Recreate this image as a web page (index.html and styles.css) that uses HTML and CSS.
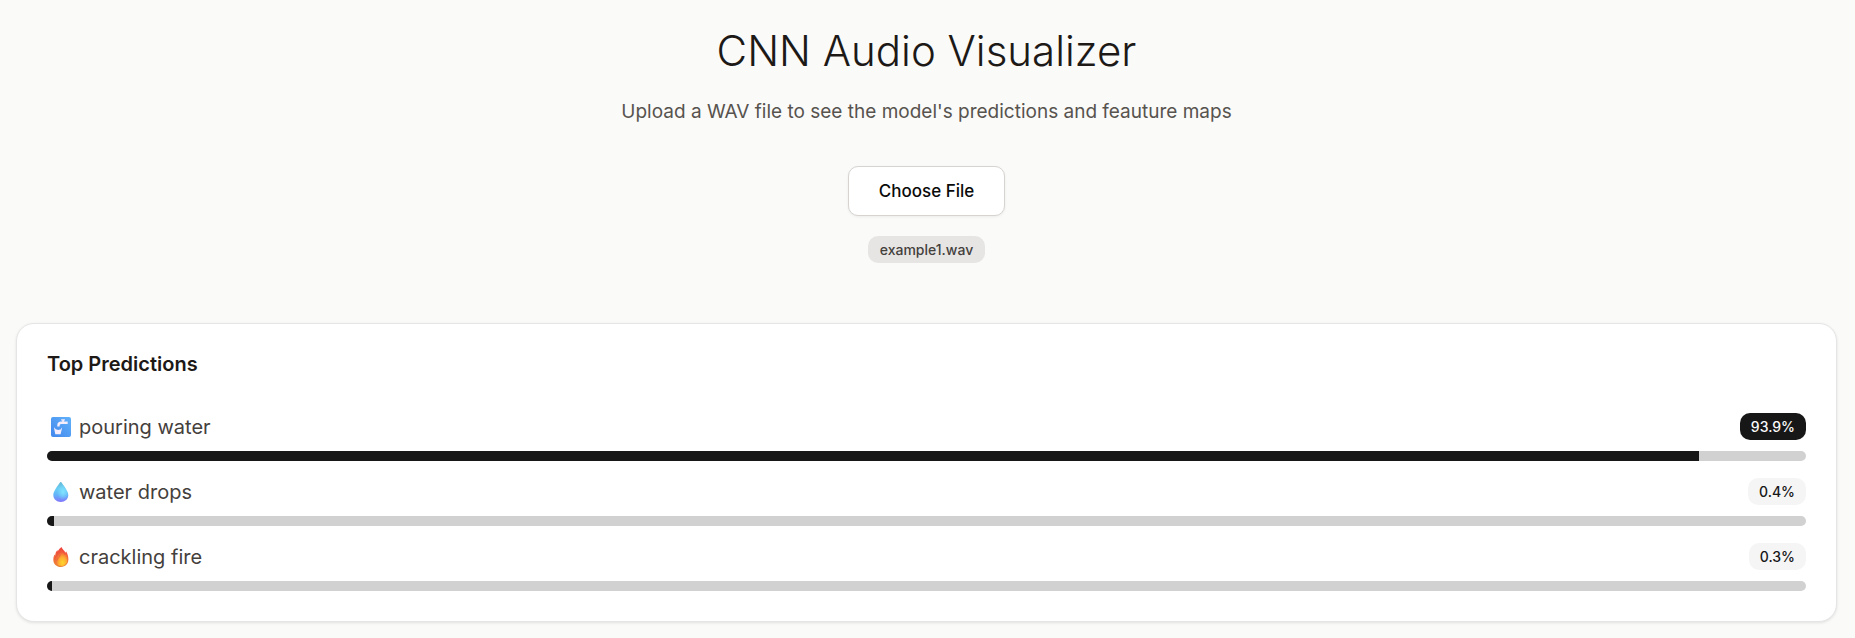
FILE: index.html
```html
<!DOCTYPE html>
<html lang="en">
<head>
<meta charset="utf-8">
<meta name="viewport" content="width=device-width, initial-scale=1">
<title>CNN Audio Visualizer</title>
<link rel="stylesheet" href="styles.css">
</head>
<body>
<main class="page">
  <header class="hero">
    <h1 class="title">CNN Audio Visualizer</h1>
    <p class="subtitle">Upload a WAV file to see the model's predictions and feauture maps</p>
    <button class="upload" type="button">Choose File</button>
    <span class="badge file-badge">example1.wav</span>
  </header>
  <section class="card" aria-labelledby="predictions-title">
    <h2 class="card-title" id="predictions-title">Top Predictions</h2>
    <ul class="predictions">
      <li class="prediction">
        <div class="row">
          <span class="label">
            <svg class="icon" viewBox="0 0 20 20" aria-hidden="true">
              <defs><linearGradient id="tap" x1="0" y1="1" x2="1" y2="0"><stop offset="0" stop-color="#4187ec"/><stop offset="1" stop-color="#62b2fb"/></linearGradient></defs>
              <rect width="20" height="20" rx="2" fill="url(#tap)"/>
              <path d="M6.300 9.500V8.200c0-2.300 1.500-3.600 3.800-3.600h1.100V3.400h-1V2.200h3.700v1.200h-1v1.100h3.800V7h-6.400C9.100 7 8.600 7.700 8.600 9.500z" fill="#f5edfb"/>
              <path d="M2.900 10.200 4.300 17.200h5.300l1.600-7-1.700 2.200-2.400.7-2.300-.8z" fill="#f5edfb"/>
            </svg>
            pouring water
          </span>
          <span class="badge badge-top">93.9%</span>
        </div>
        <div class="bar" role="progressbar" aria-label="pouring water" aria-valuenow="93.9" aria-valuemin="0" aria-valuemax="100"><div class="fill" style="width:93.9%"></div></div>
      </li>
      <li class="prediction">
        <div class="row">
          <span class="label">
            <svg class="icon" viewBox="0 0 20 20" aria-hidden="true">
              <defs>
                <linearGradient id="drop" x1="0" y1="0" x2="0" y2="1"><stop offset="0" stop-color="#67b9d6"/><stop offset=".35" stop-color="#68cdf5"/><stop offset=".65" stop-color="#63b2f8"/><stop offset="1" stop-color="#8275fb"/></linearGradient>
                <radialGradient id="shine" cx=".65" cy=".5" r=".4"><stop offset="0" stop-color="#82e3ff"/><stop offset="1" stop-color="#82e3ff" stop-opacity="0"/></radialGradient>
              </defs>
              <path d="M8.900.5c.4-.7 1.300-.7 1.700 0C13 4.300 17.300 9.200 17.300 13c0 4.100-3.300 7-7.500 7s-7.500-2.900-7.500-7C2.300 9.200 6.500 4.300 8.900.5z" fill="url(#drop)"/>
              <path d="M8.900.5c.4-.7 1.300-.7 1.700 0C13 4.300 17.300 9.200 17.300 13c0 4.100-3.300 7-7.500 7s-7.500-2.900-7.500-7C2.300 9.200 6.500 4.300 8.900.5z" fill="url(#shine)"/>
            </svg>
            water drops
          </span>
          <span class="badge">0.4%</span>
        </div>
        <div class="bar" role="progressbar" aria-label="water drops" aria-valuenow="0.4" aria-valuemin="0" aria-valuemax="100"><div class="fill" style="width:0.4%"></div></div>
      </li>
      <li class="prediction">
        <div class="row">
          <span class="label">
            <svg class="icon" viewBox="0 0 20 20" aria-hidden="true">
              <defs>
                <linearGradient id="flame" x1="0" y1="0" x2="0" y2="1"><stop offset="0" stop-color="#ef3f3e"/><stop offset=".5" stop-color="#f4683a"/><stop offset="1" stop-color="#e98638"/></linearGradient>
                <radialGradient id="glow" cx=".58" cy=".8" r=".65"><stop offset="0" stop-color="#ffd62c"/><stop offset=".5" stop-color="#fdae32"/><stop offset="1" stop-color="#f15b3b"/></radialGradient>
              </defs>
              <path d="M10.500 0c.6 2.300 3.300 4 4.300 5.800.3-.6.300-1 .3-1.500 1.600 2.400 2.300 5.300 2.300 8.300 0 4.400-3.100 7.400-7.500 7.400s-7.600-3-7.600-7.300c0-2 .5-3.800 1.500-5.200l.4 1.300c.1-2.400.8-4.300 2.300-5.800l.2 1.500C7.500 2.600 9 1.500 10.500 0z" fill="url(#flame)"/>
              <path d="M10.400 2.600c.2 2.400 2.400 3.600 3.700 5.600l.7-.8c1.300 2 1.900 4 1.600 6.300-.5 3.200-2.900 5.300-6.100 5.300-3.500 0-5.900-2.500-5.400-6.200C5.400 8.700 9.700 6.900 10.400 2.600z" fill="url(#glow)"/>
              <path d="M3.800 12.800c.2-3.500 2.400-4.700 3.300-7.500M6 13.600c.3-2.500 2.700-3.300 3.200-6" fill="none" stroke="#dd533c" stroke-width=".6"/>
            </svg>
            crackling fire
          </span>
          <span class="badge">0.3%</span>
        </div>
        <div class="bar" role="progressbar" aria-label="crackling fire" aria-valuenow="0.3" aria-valuemin="0" aria-valuemax="100"><div class="fill" style="width:0.3%"></div></div>
      </li>
    </ul>
  </section>
</main>
</body>
</html>
```

FILE: styles.css
```css
* {
  box-sizing: border-box;
}

body {
  margin: 0;
  background: #fafaf9;
  color: #1c1917;
  font-family: Inter, "Open Sans", sans-serif;
  font-size: 20px;
  line-height: 28px;
}

.page {
  padding: 26px 18px 16px 16px;
}

.hero {
  display: flex;
  flex-direction: column;
  align-items: center;
  margin-bottom: 60px;
}

.title {
  margin: 0 0 22px;
  font-size: 42px;
  font-weight: 300;
  line-height: 50px;
}

.subtitle {
  margin: 0 0 40px;
  color: #57534e;
  font-size: 19px;
}

.upload {
  height: 50px;
  margin-bottom: 20px;
  padding: 0 30px;
  border: 1px solid #d6d3d1;
  border-radius: 10px;
  background: #fff;
  box-shadow: 0 1px 3px rgba(0, 0, 0, 0.06);
  color: #0a0a0a;
  font-family: inherit;
  font-size: 17px;
  font-weight: 500;
}

.badge {
  padding: 3px 11px;
  border-radius: 10px;
  background: #f5f5f5;
  color: #171717;
  font-size: 14px;
  font-weight: 500;
  line-height: 21px;
}

.file-badge {
  padding: 3px 12px;
  background: #e7e5e4;
  color: #44403c;
}

.badge-top {
  background: #171717;
  color: #fafafa;
}

.card {
  padding: 26px 30px 30px;
  border: 1px solid #e5e5e5;
  border-radius: 18px;
  background: #fff;
  box-shadow: 0 1px 3px rgba(0, 0, 0, 0.1);
}

.card-title {
  margin: 0 0 35px;
  font-size: 20px;
  font-weight: 600;
}

.predictions {
  display: grid;
  gap: 17px;
  margin: 0;
  padding: 0;
  list-style: none;
}

.row {
  display: flex;
  align-items: center;
  justify-content: space-between;
  height: 27px;
  margin-bottom: 11px;
}

.label {
  display: flex;
  align-items: center;
  gap: 8px;
  padding-left: 4px;
  color: #44403c;
}

.icon {
  width: 20px;
  height: 20px;
}

.bar {
  height: 10px;
  overflow: hidden;
  border-radius: 5px;
  background: #d1d1d1;
}

.fill {
  height: 100%;
  background: #171717;
}
```
